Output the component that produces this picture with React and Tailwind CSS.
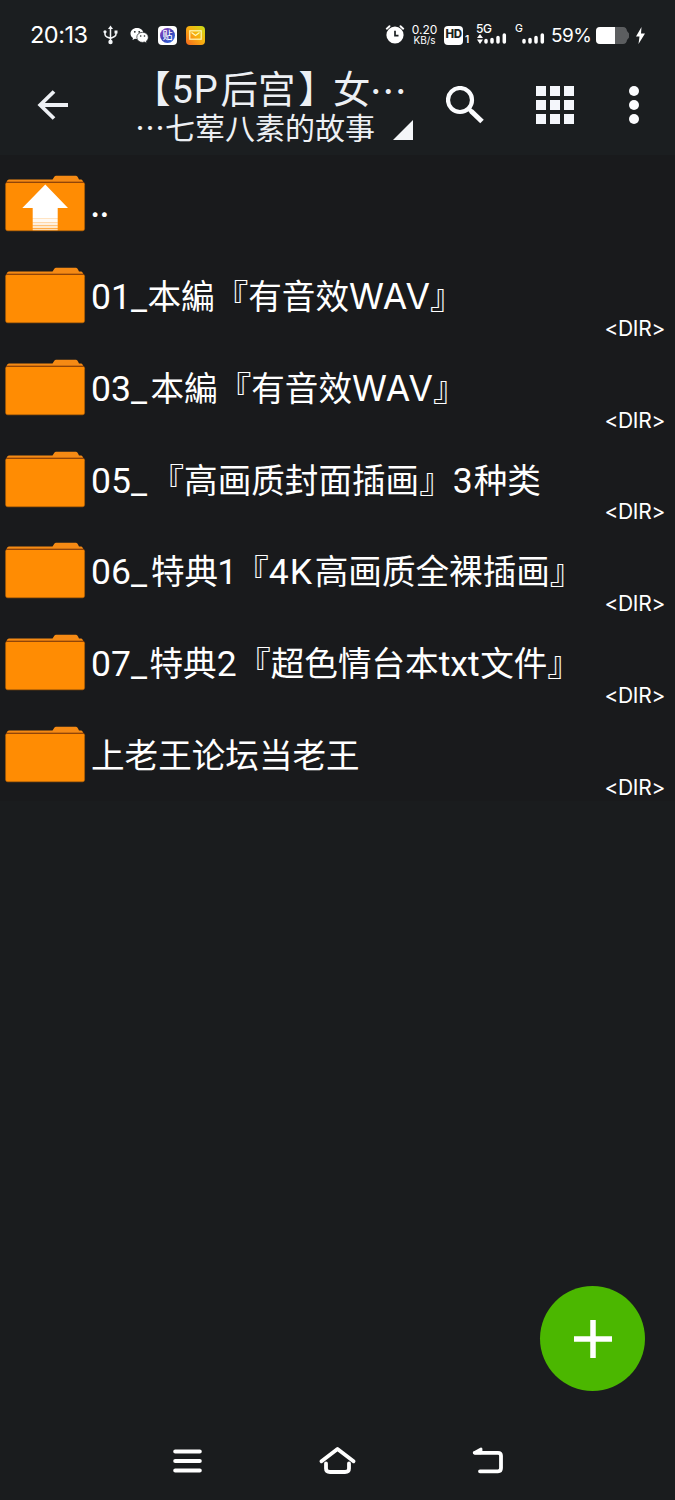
import React from 'react';

// names are split into runs so latin text gets its own font and width
const entries = [
    { id: 'up', up: true, parts: [['..', 'font-[Inter] tracking-[-1px] -indent-[1px]']] },
    { id: '01', parts: [['01_', 'font-[Roboto] w-[56.5px]'], ['本編『有音效'], ['WAV', 'font-[Inter] w-[81px] tracking-[0.7px]'], ['』']] },
    { id: '03', parts: [['03_', 'font-[Roboto] w-[59.5px]'], ['本編『有音效'], ['WAV', 'font-[Inter] w-[81px] tracking-[0.7px]'], ['』']] },
    { id: '05', parts: [['05_', 'font-[Roboto] w-[59.5px]'], ['『高画质封面插画』'], ['3', 'font-[Roboto] w-[21px]'], ['种类']] },
    { id: '06', parts: [['06_', 'font-[Roboto] w-[60px]'], ['特典'], ['1', 'font-[Roboto] w-[17px] -indent-[1px]'], ['『'], ['4K', 'font-[Roboto] w-[46px] tracking-[1px]'], ['高画质全裸插画』']] },
    { id: '07', parts: [['07_', 'font-[Roboto] w-[58.5px]'], ['特典'], ['2', 'font-[Roboto] w-[20.5px]'], ['『超色情台本'], ['txt', 'font-[Roboto] w-[41.5px]'], ['文件』']] },
    { id: 'wang', parts: [['上老王论坛当老王']] },
];

const FolderIcon = ({ up }) => (
    <svg width="82" height="58" viewBox="0 0 82 58" className="block shrink-0">
        <path d="M2.800 8 V6.500 Q3.300 4.500 5 4.500 H48.500 L50.500 1.500 Q51 .8 52 .8 H72 Q73.300 .8 74 2.500 L75 4.500 H77 Q79 4.800 79.200 8 Z" fill="#f58a14" />
        <rect x="1.600" y="7.200" width="79" height="48.600" rx="2" fill="#ff8c03" stroke="#b45f04" strokeWidth=".6" />
        <path d="M2 7.400 H80" stroke="#914508" strokeWidth="1.400" />
        {up && (
            <>
                <path d="M41.300 9.500 L64 33 H53.700 V43 H28.700 V33 H18.300 Z" fill="#fff" />
                <path d="M28.700 45.200 H53.700" stroke="#fffaf4" strokeWidth="4" />
                <path d="M28.700 48.800 H53.700" stroke="#fff0df" strokeWidth="3" />
                <path d="M28.700 51.800 H53.700" stroke="#ffe8cb" strokeWidth="2.400" />
                <path d="M28.700 54.400 H53.700" stroke="#ffdcb0" strokeWidth="1.600" />
            </>
        )}
    </svg>
);

const Signal = () => (
    <svg width="23" height="11" viewBox="0 0 23 11" className="block">
        <path d="M2 9 V7.500 M8 9 V6.500 M14 9 V4.500 M20.300 9 V2" stroke="#fff" strokeWidth="3.500" strokeLinecap="round" />
    </svg>
);

const StatusBar = () => (
    <div className="flex h-[70px] items-center pl-[30px] text-white">
        <span className="w-[73px] text-[23.5px] leading-none tracking-[-0.5px]">20:13</span>
        {/* USB */}
        <svg width="15" height="20" viewBox="0 0 15 20" className="block shrink-0" fill="none" stroke="#f4f6f8" strokeWidth="1.5">
            <path d="M7.500 3 V17 M2 7 V9.500 Q2 11 4 12 L7.500 13.500 L11.500 11.500 Q13 10.800 13 9 V7" />
            <path d="M7.500 .5 L10 4 H5 Z" fill="#f4f6f8" stroke="none" />
            <circle cx="7.500" cy="17" r="2.200" fill="#f4f6f8" stroke="none" />
            <circle cx="2" cy="6.800" r="1.600" fill="#f4f6f8" stroke="none" />
            <rect x="11.500" y="5.500" width="3" height="3" fill="#f4f6f8" stroke="none" />
        </svg>
        {/* WeChat */}
        <svg width="19" height="17" viewBox="0 0 19 17" className="ml-[12px] block shrink-0">
            <path d="M7 1 C3 1 .5 3.500 .5 6.500 C.5 8.500 1.500 10 3 11 L2.500 13 L5 11.800 Q7 12.300 8.500 12 C13 11.500 14 8 13.500 5.800 C13 3 10 1 7 1 Z" fill="#fff" />
            <path d="M12.500 5.300 C9 5.300 6.800 7.600 6.800 10.300 C6.800 13.500 9.500 15.400 12.500 15.400 L14.500 15 L16.700 16.200 L16.300 14.200 C17.500 13.300 18.300 12 18.300 10.300 C18.300 7.500 15.800 5.300 12.500 5.300 Z" fill="#fff" stroke="#1b1f21" strokeWidth=".7" />
            <g fill="#1b1f21">
                <circle cx="4.800" cy="4.800" r=".9" /><circle cx="9.200" cy="4.800" r=".9" />
                <circle cx="10.700" cy="9" r=".8" /><circle cx="14.500" cy="9" r=".8" />
            </g>
        </svg>
        <div className="ml-[9px] flex size-[19px] shrink-0 items-center justify-center rounded-[4px] bg-white">
            <div className="flex size-[15px] items-center justify-center rounded-full bg-linear-to-br from-[#a13fc0] via-[#3b3fb4] to-[#2479ee] font-['Noto_Sans_CJK_SC'] text-[10px] font-medium leading-none">贴</div>
        </div>
        <div className="ml-[9px] flex size-[19px] shrink-0 items-center justify-center rounded-[4px] bg-linear-to-tr from-[#f2641c] via-[#f9ad10] to-[#c5df17]">
            <svg width="13" height="10" viewBox="0 0 13 10" fill="none" stroke="#fff8b8" strokeWidth="1.200">
                <rect x=".8" y=".8" width="11.400" height="8.400" />
                <path d="M2.500 2.500 L6.500 5.500 L10.500 2.500" />
            </svg>
        </div>

        <svg width="20" height="20" viewBox="0 0 20 20" className="ml-[180px] block shrink-0">
            <circle cx="10" cy="10" r="8.600" fill="#fff" />
            <path d="M1.800 3.700 L4.500 1.200 M18.200 3.700 L15.500 1.200" stroke="#fff" strokeWidth="1.900" strokeLinecap="round" />
            <path d="M10 5.700 V10.700 H13.500" fill="none" stroke="#1b1f21" strokeWidth="1.700" />
        </svg>
        <div className="ml-[7px] flex w-[25px] shrink-0 flex-col items-center whitespace-nowrap pb-[2px] leading-none">
            <span className="text-[12px] leading-[11px]">0.20</span>
            <span className="text-[10px] leading-[10px]">KB/s</span>
        </div>
        <div className="ml-[7px] flex h-[19px] w-[19px] shrink-0 items-center justify-center rounded-[4px] bg-white text-[11.500px] font-extrabold leading-none tracking-[-0.4px] text-[#1b1f21]">HD</div>
        <span className="ml-[2px] mt-[8px] w-[6px] text-[10px] font-semibold leading-none">1</span>
        <div className="relative ml-[5px] flex h-[20px] w-[31px] shrink-0 items-end justify-end pb-[1px]">
            <span className="absolute left-0 top-[-2px] text-[12px] font-medium leading-[12px] tracking-[-0.5px]">5G</span>
            <svg width="6" height="10" viewBox="0 0 6 10" className="absolute bottom-[1px] left-[1px]">
                <path d="M3 0 L6 4 H0 Z M3 10 L6 5.500 H0 Z" fill="#fff" />
            </svg>
            <Signal />
        </div>
        <div className="relative ml-[8px] flex h-[20px] w-[30px] shrink-0 items-end justify-end pb-[1px]">
            <span className="absolute left-0 top-[-2px] text-[10.500px] font-medium leading-[12px]">G</span>
            <Signal />
        </div>
        <span className="ml-[6px] w-[40px] text-[19px] leading-none tracking-[-0.5px]">59%</span>
        <svg width="33" height="17" viewBox="0 0 33 17" className="ml-[5px] block shrink-0">
            <path d="M4 0 H27 Q30.500 0 31 4 L33 6.500 V10.500 L31 13 Q30.500 17 27 17 H4 Q0 17 0 13 V4 Q0 0 4 0 Z" fill="#5c5e60" />
            <path d="M4 0 H19 V17 H4 Q0 17 0 13 V4 Q0 0 4 0 Z" fill="#fff" />
        </svg>
        <svg width="9" height="17" viewBox="0 0 9 17" className="ml-[7px] block shrink-0">
            <path d="M5.500 0 L0 9.500 H3.500 L2.500 17 L9 6.500 H5 Z" fill="#fff" />
        </svg>
    </div>
);

const Header = () => (
    <div className="flex h-[85px] items-start text-[#edf0f4]">
        <svg width="32" height="30" viewBox="0 0 32 30" className="ml-[37px] mt-[20px] block shrink-0" fill="none" stroke="#edf0f4" strokeWidth="3.800">
            <path d="M31 15 H3 M17 1.500 L3.200 15 L17 28.500" />
        </svg>
        <div className="ml-[60px] flex w-[284px] shrink-0 flex-col whitespace-nowrap">
            <div className="flex h-[38px] pl-[4px] text-[37.500px] leading-[40px]">
                <span>【</span>
                <span className="w-[50px] pl-[1px] font-[Roboto] text-[38px] tracking-[1px]">5P</span>
                <span>后宫</span>
                <span className="w-[37.500px] pl-[3px]">】</span>
                <span>女</span>
                <span className="-ml-[1px] font-['Noto_Sans_CJK_SC']">⋯</span>
            </div>
            <div className="flex h-[38px] items-center">
                <div className="ml-[6px] w-[240px] text-[30px] leading-[38px]">
                    <span className="font-['Noto_Sans_CJK_SC']">⋯</span>七荤八素的故事
                </div>
                <svg width="20" height="20" viewBox="0 0 20 20" className="ml-[18px] mt-[6px] block shrink-0">
                    <path d="M20 0 V20 H0 Z" fill="#f4f6f8" />
                </svg>
            </div>
        </div>
        <svg width="38" height="38" viewBox="0 0 38 38" className="ml-[33px] mt-[16px] block shrink-0" fill="none" stroke="#fbfcfe">
            <circle cx="14" cy="14" r="12" strokeWidth="4.200" />
            <path d="M23 23 L26 26" strokeWidth="4" />
            <path d="M25 25 L36 35.500" strokeWidth="5" />
        </svg>
        <div className="ml-[52px] mt-[16px] grid shrink-0 grid-cols-3 gap-[4px]">
            {Array.from({ length: 9 }, (_, i) => (
                <div key={i} className="size-[10px] bg-[#f4f6fb]" />
            ))}
        </div>
        <div className="ml-[55px] mt-[16px] flex shrink-0 flex-col gap-[4px]">
            {[0, 1, 2].map((i) => (
                <div key={i} className="size-[10px] rounded-full bg-[#fbfcfe]" />
            ))}
        </div>
    </div>
);

const App = () => {
    return (
        <div lang="zh-CN" className="flex h-[1500px] w-[675px] flex-col overflow-hidden bg-[#1a1c1e] font-[Inter,'Noto_Sans_CJK_SC',sans-serif]">
            <div className="h-[155px] shrink-0 bg-[#1b1e20]">
                <StatusBar />
                <Header />
            </div>

            <div className="flex h-[645.500px] shrink-0 flex-col bg-[#191a1c] pt-[2px]">
                {entries.map((entry) => (
                    <div key={entry.id} className="flex h-[91.860px] shrink-0 items-start pl-[4px] pr-[10px] text-white">
                        <div className="pt-[18px]">
                            <FolderIcon up={entry.up} />
                        </div>
                        <div className="ml-[5px] mt-[21px] flex whitespace-nowrap text-[33.600px] leading-[54px]">
                            {entry.parts.map(([text, latin], i) => (
                                <span key={i} className={latin ? `block shrink-0 text-[35.5px] ${latin}` : 'block shrink-0'}>{text}</span>
                            ))}
                        </div>
                        {!entry.up && (
                            <span className="ml-auto self-end pb-[1px] text-[21px] leading-[22px] tracking-[-0.3px]">&lt;DIR&gt;</span>
                        )}
                    </div>
                ))}
            </div>

            <div className="flex flex-1 items-end justify-end pb-[29px] pr-[30px]">
                <button className="flex size-[105px] items-center justify-center rounded-full bg-[#4bb700]" aria-label="Add">
                    <svg width="38" height="38" viewBox="0 0 38 38">
                        <path d="M19 0 V38 M0 19 H38" stroke="#fff" strokeWidth="5.500" />
                    </svg>
                </button>
            </div>

            {/* System navigation */}
            <div className="flex h-[80px] shrink-0 items-center pl-[173px] pt-[1px]">
                <svg width="29" height="24" viewBox="0 0 29 24" className="block" stroke="#fff" strokeWidth="4" strokeLinecap="round">
                    <path d="M2.200 2.500 H26.800 M2.200 12 H26.800 M2.200 21.500 H26.800" />
                </svg>
                <svg width="37" height="28" viewBox="0 0 37 28" className="ml-[117px] block" fill="none" stroke="#fff" strokeWidth="3.800" strokeLinecap="round" strokeLinejoin="round">
                    <path d="M2.500 14.300 L18.500 2 L34.500 14.300" />
                    <path d="M7 16.500 V21.500 Q7 25 11 25 H26 Q30 25 30 21.500 V16.500" />
                </svg>
                <svg width="31" height="28" viewBox="0 0 31 28" className="ml-[116px] block" fill="none" stroke="#fff" strokeWidth="3.800" strokeLinecap="round" strokeLinejoin="round">
                    <path d="M3 5.800 H26 Q29 5.800 29 8.800 V21 Q29 24.300 26 24.300 H8" />
                    <path d="M2.200 5.800 L9 2 V5.800 Z" fill="#fff" strokeWidth="2.800" />
                </svg>
            </div>
        </div>
    );
};

export default App;
